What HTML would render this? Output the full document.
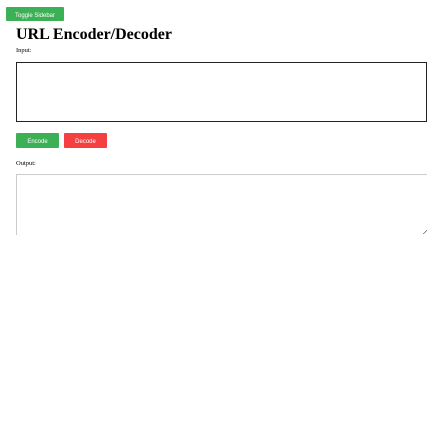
<!DOCTYPE html>
<html><head><style>
body{margin:0;width:432px;height:431px;background:#fff;position:relative;overflow:hidden;font-family:"Liberation Serif",serif}
.b{position:absolute;color:#fff;font-family:"Liberation Sans",sans-serif;font-size:6px;text-align:center;border-radius:1px;box-sizing:border-box}
.b span{position:relative;top:2px}
</style></head><body>
<div class="b" style="left:6px;top:7px;width:58px;height:14px;line-height:14px;background:#3cb054"><span>Toggle Sidebar</span></div>
<div style="position:absolute;left:16px;top:25px;font-size:16px;font-weight:bold;line-height:20px;color:#000">URL Encoder/Decoder</div>
<div style="position:absolute;left:16px;top:47px;font-size:6.5px;line-height:8px;color:#000">Input:</div>
<div style="position:absolute;left:16px;top:62px;width:409px;height:58px;border:1px solid #222"></div>
<div class="b" style="left:16px;top:133px;width:43px;height:15px;line-height:15px;background:#3cb054"><span>Encode</span></div>
<div class="b" style="left:64px;top:133px;width:43px;height:15px;line-height:15px;background:#f44040"><span>Decode</span></div>
<div style="position:absolute;left:16px;top:160px;font-size:6.5px;line-height:8px;color:#000">Output:</div>
<div style="position:absolute;left:16px;top:174px;width:410px;height:60px;border-top:1px solid #ccc;border-left:1px solid #ccc"></div>
<div style="position:absolute;left:423px;top:230px;width:4px;height:4px;background:linear-gradient(135deg,transparent 45%,#666 45%,#666 60%,transparent 60%)"></div>
</body></html>
